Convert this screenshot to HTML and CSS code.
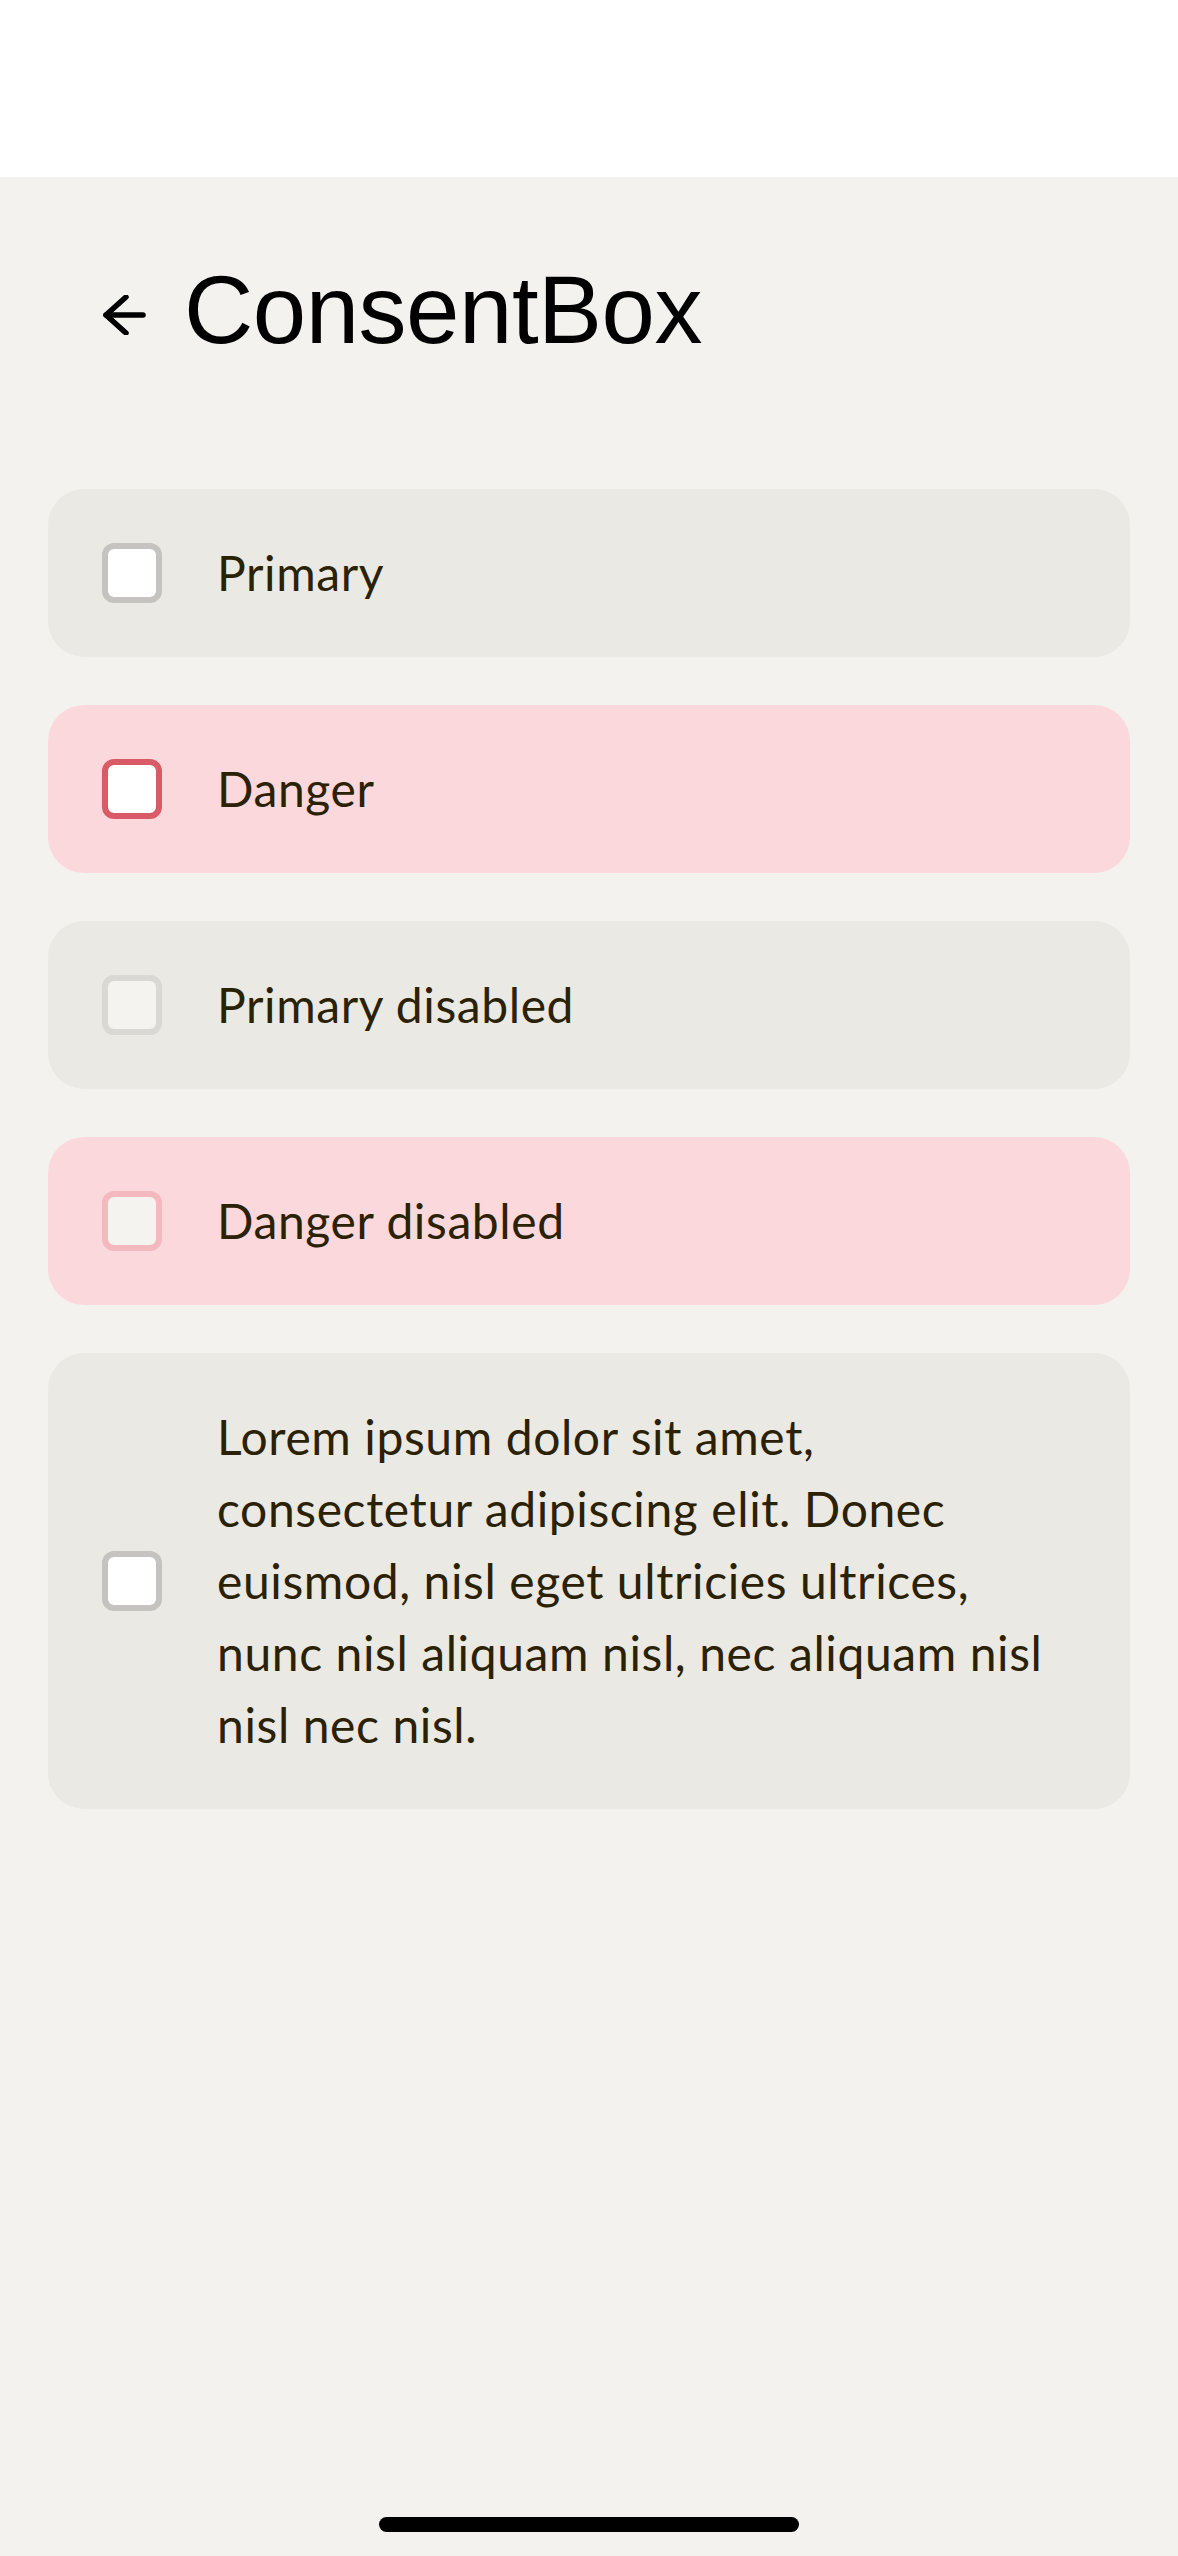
FILE: index.html
```html
<!DOCTYPE html>
<html lang="en">
<head>
<meta charset="utf-8">
<title>ConsentBox</title>
<link rel="stylesheet" href="styles.css">
</head>
<body>
<div class="status-bar"></div>
<main class="screen">
  <header class="header">
    <button class="back" aria-label="Back">
      <svg width="44" height="40" viewBox="0 0 44 40" fill="none" stroke="#000" stroke-width="5.5" stroke-linecap="round" stroke-linejoin="round">
        <path d="M41 20H4"/>
        <path d="M24 2L4 20L24 38"/>
      </svg>
    </button>
    <h1 class="title">ConsentBox</h1>
  </header>
  <section class="list">
    <label class="item">
      <span class="box"></span>
      <span class="label">Primary</span>
    </label>
    <label class="item danger">
      <span class="box"></span>
      <span class="label">Danger</span>
    </label>
    <label class="item disabled">
      <span class="box"></span>
      <span class="label">Primary disabled</span>
    </label>
    <label class="item danger disabled">
      <span class="box"></span>
      <span class="label">Danger disabled</span>
    </label>
    <label class="item">
      <span class="box"></span>
      <span class="label">Lorem ipsum dolor sit amet, consectetur adipiscing elit. Donec euismod, nisl eget ultricies ultrices, nunc nisl aliquam nisl, nec aliquam nisl nisl nec nisl.</span>
    </label>
  </section>
  <div class="home-indicator"></div>
</main>
</body>
</html>
```
FILE: styles.css
```css
* { box-sizing: border-box; }
html, body {
  margin: 0;
  padding: 0;
  background: #f3f2ee;
}
body {
  width: 1178px;
  height: 2556px;
  display: flex;
  flex-direction: column;
  font-family: Lato, "Open Sans", sans-serif;
  overflow: hidden;
}
.status-bar {
  height: 177px;
  background: #ffffff;
  flex: none;
}
.screen {
  flex: 1;
  display: flex;
  flex-direction: column;
  background: #f3f2ee;
}
.header {
  display: flex;
  align-items: flex-start;
  padding: 73px 48px 0 102px;
  height: 312px;
}
.back {
  border: 0;
  background: none;
  padding: 0;
  margin: 45px 38px 0 0;
  width: 44px;
  height: 40px;
  display: flex;
}
.title {
  margin: 0;
  font-family: "Liberation Sans", Arial, sans-serif;
  font-weight: 400;
  font-size: 96px;
  line-height: 120px;
  color: #000;
  letter-spacing: -0.5px;
}
.list {
  display: flex;
  flex-direction: column;
  gap: 48px;
  padding: 0 48px;
}
.item {
  display: flex;
  align-items: center;
  gap: 55px;
  min-height: 168px;
  padding: 48px 78px 48px 54px;
  background: #eae9e4;
  border-radius: 36px;
}
.item.danger { background: #fad8dc; }
.box {
  flex: none;
  width: 60px;
  height: 60px;
  border: 6px solid #c4c3bf;
  border-radius: 12px;
  background: #ffffff;
}
.danger .box { border-color: #d95b67; }
.disabled .box { border-color: #d9d8d4; background: #f4f3ef; }
.danger.disabled .box { border-color: #f4b9be; background: #f4f3ef; }
.label {
  font-size: 48px;
  line-height: 72px;
  letter-spacing: 0.6px;
  color: #2b2206;
}
.home-indicator {
  margin: auto auto 24px;
  width: 420px;
  height: 15px;
  border-radius: 8px;
  background: #000;
}
```
